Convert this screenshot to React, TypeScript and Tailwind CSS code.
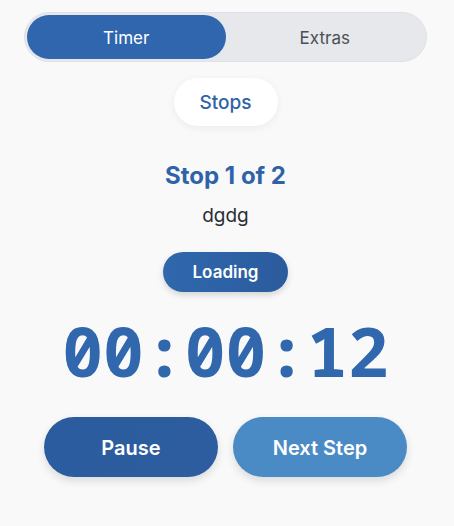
export default function App() {
  return (
    <div
      className="min-h-[526px] w-full bg-[#f9f9fa] pl-6 pr-[27px] pt-3"
      style={{ fontFamily: "Inter, 'Noto Sans', sans-serif" }}
    >
      <div className="flex h-[50px] w-[403px] items-center rounded-full border border-[#dfe1e5] bg-[#e6e8ec] p-[2px]">
        <button className="flex h-[44px] flex-1 items-center justify-center rounded-full bg-[#2f66ae] pt-[3px] text-[17px] text-white">
          Timer
        </button>
        <button className="flex h-[44px] flex-1 items-center justify-center rounded-full pt-[3px] text-[17px] text-[#4b4f56]">
          Extras
        </button>
      </div>

      <div className="mt-4 flex flex-col items-center">
        <button className="flex h-[48px] w-[104px] items-center justify-center rounded-full bg-white pt-[3px] text-[19px] font-medium text-[#2f63a8] shadow-[0_2px_8px_rgba(0,0,0,0.06)]">
          Stops
        </button>

        <h2 className="mt-[35px] text-[24px] font-bold leading-[30px] text-[#2f63a8]">
          Stop 1 of 2
        </h2>
        <p className="mt-[13px] text-[19px] leading-[24px] text-[#2b2e33]">dgdg</p>

        <div className="mt-[24px] flex h-[40px] w-[125px] items-center justify-center rounded-full bg-gradient-to-r from-[#3068ad] to-[#2a5b9d] pt-[1px] text-[17px] font-semibold text-white shadow-[0_3px_6px_rgba(0,0,0,0.15)]">
          Loading
        </div>

        <div
          className="mt-[19px] text-[68px] font-bold leading-[80px] text-[#3067ad]"
          style={{ fontFamily: "'Noto Sans Mono', monospace" }}
        >
          00:00:12
        </div>

        <div className="mt-[26px] flex gap-[15px]">
          <button className="flex h-[60px] w-[174px] items-center justify-center rounded-full bg-gradient-to-r from-[#2a5c9f] to-[#2d5d9e] pt-[2px] text-[20px] font-semibold text-white shadow-[0_4px_8px_rgba(0,0,0,0.12)]">
            Pause
          </button>
          <button className="flex h-[60px] w-[174px] items-center justify-center rounded-full bg-[#4a8bc5] pt-[2px] text-[20px] font-semibold text-white shadow-[0_4px_8px_rgba(0,0,0,0.12)]">
            Next Step
          </button>
        </div>
      </div>
    </div>
  );
}
